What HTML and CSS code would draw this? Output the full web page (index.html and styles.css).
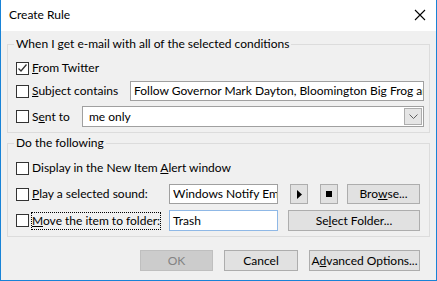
FILE: index.html
```html
<!DOCTYPE html>
<html>
<head>
<meta charset="utf-8">
<link rel="stylesheet" href="styles.css">
</head>
<body>
<div class="window">
  <div class="titlebar">
    <span class="title">Create Rule</span>
    <svg class="close" width="12" height="12" viewBox="0 0 12 12"><path d="M1 1L11 11M11 1L1 11" stroke="#000" stroke-width="1.1" fill="none"/></svg>
  </div>
  <div class="content">
    <fieldset class="group g1">
      <legend>When I get e-mail with all of the selected conditions</legend>
      <div class="row r1">
        <span class="cb checked"><svg width="11" height="11" viewBox="0 0 11 11"><path d="M1.5 5.5L4 8L9.5 1.5" stroke="#333" stroke-width="1.3" fill="none"/></svg></span>
        <span class="lbl"><u>F</u>rom Twitter</span>
      </div>
      <div class="row r2">
        <div class="lead w-subject"><span class="cb"></span><span class="lbl"><u>S</u>ubject contains</span></div>
        <div class="input grow">Follow Governor Mark Dayton, Bloomington Big Frog and others on Twitter</div>
      </div>
      <div class="row r3">
        <div class="lead w-sent"><span class="cb"></span><span class="lbl">S<u>e</u>nt to</span></div>
        <div class="input combo grow"><span class="combo-text">me only</span><span class="drop"><svg width="9" height="5" viewBox="0 0 9 5"><path d="M0.5 0.5L4.5 4.5L8.5 0.5" stroke="#606060" stroke-width="1" fill="none"/></svg></span></div>
      </div>
    </fieldset>
    <fieldset class="group g2">
      <legend>Do the following</legend>
      <div class="row s1">
        <span class="cb"></span>
        <span class="lbl">Display in the New Item <u>A</u>lert window</span>
      </div>
      <div class="row s2">
        <div class="lead w-act"><span class="cb"></span><span class="lbl"><u>P</u>lay a selected sound:</span></div>
        <div class="input fixed">Windows Notify Email.wav</div>
        <div class="btn sq"><svg width="5" height="9" viewBox="0 0 5 9"><path d="M0 0L5 4.5L0 9Z" fill="#000"/></svg></div>
        <div class="btn sq"><span class="stop"></span></div>
        <div class="btn browse">Bro<u>w</u>se...</div>
      </div>
      <div class="row s3">
        <div class="lead w-act"><span class="cb"></span><span class="lbl focus"><u>M</u>ove the item to folder:</span></div>
        <div class="input fixed focused">Trash</div>
        <div class="btn folder">Se<u>l</u>ect Folder...</div>
      </div>
    </fieldset>
    <div class="actions">
      <div class="btn disabled ok">OK</div>
      <div class="btn cancel">Cancel</div>
      <div class="btn adv">A<u>d</u>vanced Options...</div>
    </div>
  </div>
</div>
</body>
</html>
```

FILE: styles.css
```css
* { box-sizing: border-box; }
html, body { margin: 0; padding: 0; }
body {
  width: 437px;
  height: 281px;
  font-family: Lato, "Noto Sans", sans-serif;
  font-size: 12px;
  color: #000;
  overflow: hidden;
}
.window {
  width: 437px;
  height: 281px;
  border: 1px solid #1883d7;
  border-top: none;
  display: flex;
  flex-direction: column;
  background: #f0f0f0;
}
.titlebar {
  height: 31px;
  background: #fff;
  display: flex;
  align-items: center;
  justify-content: space-between;
  padding: 0 10px 2px 8px;
  flex: none;
}
.title { font-size: 12px; line-height: 16px; }
.content {
  flex: 1;
  padding: 5px 6px 0 6px;
  display: flex;
  flex-direction: column;
}
.group {
  margin: 0;
  padding: 0 7px 5px 8px;
  border: 1px solid #dcdcdc;
  min-width: 0;
}
.group legend {
  padding: 0 2px;
  margin-left: -2px;
  line-height: 16px;
}
.g2 { margin-top: 2px; padding-right: 9px; }
.row {
  display: flex;
  align-items: center;
}
.lead { display: flex; align-items: center; flex: none; }
.w-subject { width: 114px; }
.w-sent { width: 66px; }
.w-act { width: 153px; }
.r1 { height: 20px; margin-top: 6px; }
.r2 { height: 20px; margin-top: 3px; }
.r3 { height: 21px; margin-top: 5px; }
.s1 { height: 20px; margin-top: 7px; }
.s2 { height: 20px; margin-top: 6px; }
.s3 { height: 21px; margin-top: 6px; }
.cb {
  width: 13px;
  height: 13px;
  border: 1px solid #333;
  background: #fff;
  flex: none;
  display: flex;
  align-items: center;
  justify-content: center;
}
.lbl { margin-left: 3px; white-space: nowrap; line-height: 16px; }
.lbl.focus { outline: 1px dotted #000; outline-offset: 0; }
.input {
  height: 100%;
  border: 1px solid #a0a0a0;
  background: #fff;
  padding: 0 3px;
  white-space: nowrap;
  overflow: hidden;
  display: flex;
  align-items: center;
  line-height: 16px;
}
.grow { flex: 1; min-width: 0; margin-right: -2px; }
.fixed { width: 109px; flex: none; }
.focused { border-color: #8fb8e6; }
.combo { padding-right: 1px; justify-content: space-between; }
.combo-text { padding-left: 3px; }
.drop {
  width: 18px;
  height: 17px;
  background: #e5e5e5;
  border: 1px solid #adadad;
  display: flex;
  align-items: center;
  justify-content: center;
}
.btn {
  height: 100%;
  background: #e1e1e1;
  border: 1px solid #adadad;
  display: flex;
  align-items: center;
  justify-content: center;
  white-space: nowrap;
  line-height: 16px;
  flex: none;
}
.sq { width: 18px; margin-left: 12px; }
.sq + .sq { margin-left: 12px; }
.stop { width: 6px; height: 6px; background: #000; display: block; }
.browse { width: 73px; margin-left: auto; }
.folder { flex: 1; margin-left: 10px; }
.actions {
  display: flex;
  justify-content: flex-end;
  gap: 11px;
  margin-top: 13px;
  padding-right: 10px;
  height: 21px;
}
.ok { width: 73px; }
.cancel { width: 74px; }
.adv { width: 111px; }
.disabled { background: #cccccc; border-color: #bfbfbf; color: #838383; }
```
